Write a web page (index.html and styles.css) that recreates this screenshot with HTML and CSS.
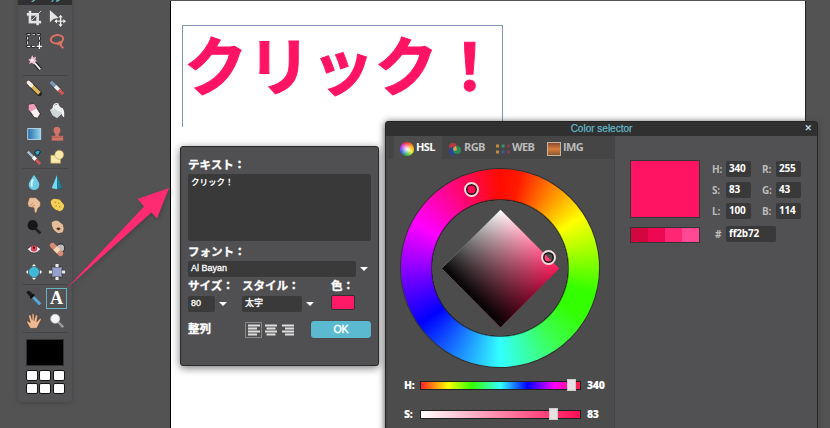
FILE: index.html
```html
<!DOCTYPE html>
<html lang="ja">
<head>
<meta charset="utf-8">
<title>Color selector</title>
<link rel="stylesheet" href="styles.css">
</head>
<body>
<main class="desktop">
  <section class="canvas"><div class="text-layer">クリック！</div></section>

  <aside class="palette">
    <header class="palette-title">ツール</header>
    <div class="tools g1">
      <svg viewBox="0 0 20 20"><path d="M5.500 2v12.500H18M2 6h12v12" fill="none" stroke="#e4e4e4" stroke-width="3"/><path d="M7 13L18 2" stroke="#ddd"/></svg>
      <svg viewBox="0 0 20 20"><path d="M2 1v14l4-4 6-1z" fill="#e6e6e6"/><path d="M14 8v11M8 13.500h11" stroke="#eee" stroke-width="1.600"/><path d="M14 6.500l2.500 3h-5zM14 20l2.500-3h-5zM7 13.500l3-2.500v5zM20 13.500l-3-2.500v5z" fill="#eee"/></svg>
      <svg viewBox="0 0 20 20"><path d="M3 3h13v13H3z" fill="none" stroke="#1c1c1c" stroke-width="2.600" stroke-dasharray="3.600 1.600"/><path d="M3 3h13v13H3z" fill="none" stroke="#f4f4f4" stroke-width="1.200" stroke-dasharray="3 2.200"/><path d="M16 13v6M13 16h6" stroke="#fff" stroke-width="1.500"/></svg>
      <svg viewBox="0 0 20 20"><ellipse cx="10" cy="8" rx="7" ry="4.600" fill="none" stroke="#d37467" stroke-width="2.400" transform="rotate(-8 10 8)"/><path d="M12 11l3 1-1 3 3 3M13 13l-3 1" fill="none" stroke="#d37467" stroke-width="2.400"/></svg>
      <svg viewBox="0 0 20 20"><path d="M9 8l8 9" stroke="#181818" stroke-width="4"/><path d="M9 8l8 9" stroke="#eee" stroke-width="2"/><path d="M8 1l1.500 3 3-1-1 3 2 2-3 1 0 3-3-2-3 1 1-3-2-2 3-1z" fill="#f4b9d2"/><circle cx="8" cy="7" r="1.500" fill="#fff"/></svg>
    </div>
    <div class="tools g2">
      <svg viewBox="0 0 20 20"><path d="M5 5l11 11" stroke="#222" stroke-width="5.500" stroke-linecap="round"/><path d="M5 5l11 11" stroke="#deb45a" stroke-width="4.200"/><path d="M4 4l3 3" stroke="#f8e9e2" stroke-width="4.500" stroke-linecap="round"/></svg>
      <svg viewBox="0 0 20 20"><path d="M3 3l6 6" stroke="#7b99b9" stroke-width="4"/><path d="M8 8l5 5" stroke="#f2f2f2" stroke-width="4"/><path d="M12 12l5 5" stroke="#c75b57" stroke-width="4"/></svg>
      <svg viewBox="0 0 20 20"><path d="M4 3l6-1 7 11-3 5-4-1-6-9z" fill="#fff0f3" stroke="#222" stroke-width=".7"/><path d="M4 3l6-1 3 5-7 4-2-3z" fill="#ee9cb8"/></svg>
      <svg viewBox="0 0 20 20"><path d="M2 9l9-7 7 9-8 7-5-3z" fill="#cfd5d8"/><path d="M6 9V5q1-4 5-3v4" fill="none" stroke="#f3f3f3" stroke-width="1.500"/><path d="M14 6q5 0 4 11-3-1-3-6" fill="#f2f5f6"/><ellipse cx="11" cy="7" rx="5" ry="2.500" fill="#eef1f2" transform="rotate(40 11 7)"/></svg>
      <svg viewBox="0 0 20 20"><defs><linearGradient id="grad"><stop stop-color="#276aa8"/><stop offset="1" stop-color="#92d7ef"/></linearGradient></defs><rect x="3" y="4" width="14.500" height="12" fill="url(#grad)" stroke="#c5e2ef"/></svg>
      <svg viewBox="0 0 20 20"><circle cx="10" cy="6" r="4" fill="#cf7568"/><path d="M8 8h4v4h5v5.500H4V12h4z" fill="#cf7568"/><path d="M4 13.500h13" stroke="#a8554b"/></svg>
      <svg viewBox="0 0 20 20"><path d="M3 4l7 7" stroke="#a8bfda" stroke-width="3"/><path d="M9 10l3 3" stroke="#fff" stroke-width="4"/><path d="M12 13l5 5" stroke="#c75b57" stroke-width="3.500"/><path d="M11 5q3-5 6-1l-2 4q-3 1-4-3" fill="#3aa8c8" stroke="#182c33"/></svg>
      <svg viewBox="0 0 20 20"><g fill="#f6e9a9" stroke="#bd9e5c" stroke-width=".7"><path d="M3 8h11v9H3z"/><circle cx="12.500" cy="7.500" r="5"/></g></svg>
    </div>
    <div class="tools g3">
      <svg viewBox="0 0 20 20"><path d="M10 2q6 8 6 11a6 6 0 0 1-12 0q0-3 6-11z" fill="#70cbe5"/><path d="M9 7q-3 5-1 8" stroke="#d5f5fc" stroke-width="2" fill="none"/></svg>
      <svg viewBox="0 0 20 20"><path d="M10 2l6 15-6 1z" fill="#227c98"/><path d="M10 2L4 17l6 1z" fill="#78d8ec"/></svg>
      <svg viewBox="0 0 20 20"><path d="M5 2h7l5 5v4l-3 3-1 4-2 1-1-6-6-1-1-4z" fill="#eac09b" stroke="#8e6a50" stroke-width=".5"/><path d="M6 10l3-2M8 12l3-2" stroke="#b88a66" fill="none"/></svg>
      <svg viewBox="0 0 20 20"><path d="M3 6q1-3 4-3l6 1 5 6q0 6-5 7l-5-2q-5-4-5-9z" fill="#f3cf57"/><g fill="#b58f29"><circle cx="8" cy="7" r=".8"/><circle cx="12" cy="8" r=".8"/><circle cx="9" cy="11" r=".8"/><circle cx="13" cy="12" r=".8"/></g></svg>
      <svg viewBox="0 0 20 20"><path d="M11 11l6 6" stroke="#222" stroke-width="2.800"/><circle cx="8.500" cy="8" r="5.500" fill="#171717"/></svg>
      <svg viewBox="0 0 20 20"><path d="M4 5q3-3 7-2l5 4q3 5 0 9l-5 1q-7-4-7-12z" fill="#e7bc98"/><path d="M9 12q3-3 5 0l-2 2z" fill="#49362d"/></svg>
      <svg viewBox="0 0 20 20"><path d="M2.500 10q7.500-7 15 0-7.500 9-15 0z" fill="#fff" stroke="#333" stroke-width=".7"/><circle cx="10" cy="9.500" r="3.600" fill="#d9465c"/><circle cx="10" cy="8.500" r="1.200" fill="#3d1118"/></svg>
      <svg viewBox="0 0 20 20"><circle cx="14" cy="9" r="4.500" fill="#bbb" stroke="#333"/><path d="M5 6l9 9" stroke="#d68b77" stroke-width="6" stroke-linecap="round"/><path d="M8 9l4 4" stroke="#f6d5b5" stroke-width="6"/></svg>
      <svg viewBox="0 0 20 20"><circle cx="10" cy="10" r="5.800" fill="#40b7d5"/><path d="M7.500 3.500h5L10 1zM7.500 16.500h5L10 19zM3.500 7.500v5L1 10zM16.500 7.500v5L19 10z" fill="#fff"/></svg>
      <svg viewBox="0 0 20 20"><path d="M10 1v18M1 10h18" stroke="#eee" stroke-width="3.600"/><path d="M4 4q6 2 12 0-2 6 0 12-6-2-12 0 2-6 0-12z" fill="#989fca" stroke="#444" stroke-width=".7"/></svg>
    </div>
    <div class="tools g4">
      <svg viewBox="0 0 20 20"><path d="M4 4l5 5" stroke="#1a1a1a" stroke-width="4" stroke-linecap="round"/><path d="M6 10l4-4" stroke="#111" stroke-width="2"/><path d="M9 9l8 8" stroke="#5ba7d9" stroke-width="3.500"/></svg>
      <span class="type-tool">A</span>
      <svg viewBox="0 0 20 20"><path d="M6 18l-4-7 1-1 3 2-2-8 2-1 2 6V2h2v8l2-7 2 1-1 7 4-4 1 1-5 10z" fill="#edba91" stroke="#76513c" stroke-width=".4"/></svg>
      <svg viewBox="0 0 20 20"><path d="M11 11l6 6" stroke="#999" stroke-width="3"/><circle cx="8" cy="7.500" r="5" fill="#f4f4f4" stroke="#ccc"/></svg>
    </div>
    <div class="front-color"></div>
    <div class="swatches"><i></i><i></i><i></i><i></i><i></i><i></i></div>
  </aside>

  <section class="text-dialog">
    <label class="caption">テキスト：</label>
    <div class="textarea">クリック！</div>
    <label class="caption font-caption">フォント：</label>
    <div class="font-row"><div class="field">Al Bayan</div><i class="caret"></i></div>
    <div class="options">
      <div><label class="caption">サイズ：</label><div class="control"><span class="field">80</span><i class="caret"></i></div></div>
      <div><label class="caption">スタイル：</label><div class="control style-control"><span class="field">太字</span><i class="caret"></i></div></div>
      <div><label class="caption">色：</label><div class="text-color"></div></div>
    </div>
    <div class="actions">
      <span class="caption">整列</span>
      <div class="aligns">
        <svg class="selected" viewBox="0 0 17 16"><path d="M3 3.500h12M3 6.500h9M3 9.500h12M3 12.500h9" stroke="#ddd" stroke-width="2"/></svg>
        <svg viewBox="0 0 17 16"><path d="M3 3.500h12M4.500 6.500h9M3 9.500h12M4.500 12.500h9" stroke="#ddd" stroke-width="2"/></svg>
        <svg viewBox="0 0 17 16"><path d="M3 3.500h12M6 6.500h9M3 9.500h12M6 12.500h9" stroke="#ddd" stroke-width="2"/></svg>
      </div>
      <div class="ok">OK</div>
    </div>
  </section>

  <section class="color-dialog">
    <header class="title">Color selector<span class="close">✕</span></header>
    <div class="body">
      <div class="picker">
        <nav class="tabs">
          <div class="tab active"><i class="hue-icon"></i>HSL</div>
          <div class="tab rgb"><svg viewBox="0 0 14 14"><circle cx="5" cy="5" r="4" fill="#b73942"/><circle cx="5" cy="9" r="4" fill="#294596"/><circle cx="9" cy="8" r="4" fill="#2d8a55"/><path d="M5 6l3-2 1 4-3 1z" fill="#e2a54f"/></svg>RGB</div>
          <div class="tab web"><svg viewBox="0 0 14 14"><path d="M0 4h3M0 10h3" stroke="#bb8c42" stroke-width="3"/><path d="M5.500 4h3" stroke="#389466" stroke-width="3"/><path d="M5.500 10h3" stroke="#355e9c" stroke-width="3"/><path d="M11 4h3M11 10h3" stroke="#8d3851" stroke-width="3"/></svg>WEB</div>
          <div class="tab img"><i class="img-icon"></i>IMG</div>
        </nav>
        <div class="wheel">
          <div class="ring"></div><div class="diamond"></div>
          <i class="marker hue-marker"></i><i class="marker tone-marker"></i>
        </div>
        <div class="slider"><b>H:</b><div class="track hue"><i class="thumb"></i></div><b>340</b></div>
        <div class="slider second"><b>S:</b><div class="track saturation"><i class="thumb"></i></div><b>83</b></div>
      </div>
      <div class="values">
        <div class="preview"><div class="current"></div><div class="shades"><i></i><i></i><i></i><i></i></div></div>
        <div class="numbers">
          <b>H:</b><span>340</span><b>R:</b><span>255</span>
          <b>S:</b><span>83</span><b>G:</b><span>43</span>
          <b>L:</b><span>100</span><b>B:</b><span>114</span>
          <b class="hash">#</b><span class="hex">ff2b72</span>
        </div>
      </div>
    </div>
  </section>

  <svg class="arrow" viewBox="0 0 830 428"><path d="M66.500 288.500L144 206.500 137.500 199 169 188 157 218.500 151.500 212.500Z" fill="#ff2b72"/></svg>
</main>
</body>
</html>
```
FILE: styles.css
```css
* { box-sizing: border-box; }
body { margin: 0; }
.desktop { position: relative; width: 830px; height: 428px; overflow: hidden; background: #535353; color: #fff; font-family: "Liberation Sans", "Noto Sans CJK JP", sans-serif; }
.canvas { position: absolute; left: 170px; top: 1px; width: 636px; height: 430px; padding: 24px 0 0 11px; background: #fff; border-left: 1px solid #000; border-right: 1px solid #222; }
.text-layer { width: 321px; height: 102px; border: 1px solid #8094b8; border-bottom: 0; padding-left: 1px; color: #ff1464; font: bold 63.5px/73px "Noto Sans CJK JP", sans-serif; white-space: nowrap; -webkit-text-stroke: 1px #ff1464; }
.palette { position: absolute; left: 18px; top: -13px; width: 54px; height: 415px; background: #525254; border-radius: 3px; box-shadow: 0 1px 5px #444; }
.palette-title { height: 18px; background: #303030; color: #73c9d6; font: 11px/20px "Noto Sans CJK JP", sans-serif; text-align: center; }
.tools { display: grid; grid-template-columns: 23px 23px; justify-content: center; align-items: center; justify-items: center; border-bottom: 1px solid #454547; margin: 0 4px; }
.tools svg { width: 18px; height: 18px; filter: drop-shadow(0 0 .5px #222); }
.g1 { height: 71px; padding-top: 2px; grid-auto-rows: 22.6px; }
.g2 { height: 93px; padding-top: 1px; grid-auto-rows: 22.8px; }
.g3 { height: 116px; padding-top: 2px; grid-auto-rows: 22.4px; }
.g4 { height: 48px; padding-top: 2px; grid-auto-rows: 22.6px; }
.type-tool { width: 21px; height: 21px; border: 1.5px solid #66b4c2; font: bold 18px/18px "Liberation Serif", serif; text-align: center; }
.front-color { width: 38px; height: 27px; margin: 6px auto 0; background: #000; border: 1px solid #333; }
.swatches { display: grid; grid-template-columns: repeat(3, 12px); grid-auto-rows: 11px; gap: 2px 1.500px; justify-content: center; margin-top: 4px; }
.swatches i { background: #fff; border: 1px solid #141414; border-radius: 2px; }
.text-dialog { position: absolute; left: 180px; top: 146px; width: 199px; height: 220px; padding: 11px 7px; background: #505052; border: 1px solid #292929; border-radius: 3px; box-shadow: 0 2px 9px #777; }
.caption { display: block; height: 16px; font: bold 11.500px/13px "Noto Sans CJK JP", sans-serif; white-space: nowrap; -webkit-text-stroke: .3px #fff; }
.textarea { width: 183px; height: 67px; padding: 0 3px; background: #393939; border-radius: 3px; font: bold 8.500px/14px "Noto Sans CJK JP", sans-serif; }
.font-caption { margin-top: 4px; }
.field { display: block; height: 16px; padding-left: 3px; background: #3a3a3a; border-radius: 2px; font: 9px/15px "Liberation Sans", "Noto Sans CJK JP", sans-serif; -webkit-text-stroke: .3px #fff; }
.font-row, .control { display: flex; align-items: center; gap: 4px; }
.font-row .field { width: 168px; }
.caret { border: 4px solid transparent; border-top-color: #fff; border-bottom: 0; }
.options { display: grid; grid-template-columns: 54px 89px 1fr; margin-top: 2px; }
.control .field { width: 27px; }
.style-control .field { width: 60px; }
.control { margin-top: 1px; }
.text-color { width: 24px; height: 15px; background: #ff1966; border: 1px solid #303030; border-radius: 2px; }
.actions { display: grid; grid-template-columns: 57px 66px 60px; align-items: center; margin-top: 9px; }
.aligns { display: flex; }
.aligns svg { width: 17px; height: 16px; }
.aligns .selected { outline: 1px solid #888; outline-offset: -1px; }
.ok { height: 17px; background: #5cbad0; border-radius: 3px; font: 10.500px/17px "Liberation Sans", sans-serif; -webkit-text-stroke: .4px #fff; text-align: center; box-shadow: 0 0 1px #222; }
.color-dialog { position: absolute; left: 385px; top: 121px; width: 433px; height: 312px; background: #515153; border: 1px solid #262626; border-radius: 3px; box-shadow: 0 1px 7px #444; }
.title { position: relative; height: 14px; background: #303030; color: #61b8c9; font-size: 10px; line-height: 13px; text-align: center; -webkit-text-stroke: .25px #61b8c9; }
.close { position: absolute; right: 5px; top: 0; color: #fff; font: bold 9px/13px "DejaVu Sans", sans-serif; }
.body { display: flex; height: 296px; }
.picker { width: 229px; background: #4c4c4c; border-left: 2px solid #484848; border-right: 1px solid #454545; }
.tabs { display: flex; height: 23px; padding-left: 6px; background: #454545; }
.tab { display: flex; align-items: center; gap: 2px; width: 48px; padding: 0 0 2px 6px; color: #bbb; font: bold 11px/20px "Open Sans", sans-serif; letter-spacing: -.6px; }
.tab svg, .tab i { width: 14px; height: 14px; margin-top: 4px; flex: none; }
.active { background: #4c4c4c; color: #fff; }
.rgb { width: 48px; }
.web { width: 51px; }
.hue-icon { border-radius: 50%; background: radial-gradient(#fff, transparent 60%), conic-gradient(#f33, #f90, #ee3, #3b4, #36e, #c3e, #f33); }
.img-icon { border: 1px solid #c3b49d; background: linear-gradient(#8c4b34, #d87d3b 50%, #8c582f); }
.wheel { position: relative; width: 198px; height: 198px; margin: 10px 0 0 13px; }
.ring { width: 198px; height: 198px; border-radius: 50%; background: radial-gradient(circle, #4c4c4c 0 67.5px, #222 68px, transparent 69.5px), conic-gradient(#ff0c00, #ff1a00 12deg, #ff0 58deg, #3f0 105deg, #3f0 120deg, #3cff55 145deg, #3ff 180deg, #00f 235deg, #f0f 298deg, #ff0c00); box-shadow: 0 0 0 1px #303030; }
.diamond { position: absolute; left: 57.500px; top: 57.500px; width: 83px; height: 83px; transform: rotate(45deg); background: linear-gradient(to top, #000, transparent), linear-gradient(to right, #fff, #ff1759); }
.marker { position: absolute; width: 15px; height: 15px; border: 2px solid #f2dddd; border-radius: 50%; box-shadow: inset 0 0 0 1.500px #171717; }
.hue-marker { left: 63px; top: 13px; }
.tone-marker { left: 140px; top: 81px; }
.slider { display: grid; grid-template-columns: 16px 164px 30px; align-items: center; margin: 10px 0 0 16px; height: 16px; font: bold 10.500px/16px "Open Sans", sans-serif; letter-spacing: -.3px; }
.slider b:last-child { padding-left: 3px; }
.second { margin-top: 13px; }
.track { position: relative; width: 161px; height: 9px; border: 1px solid #202020; }
.hue { background: linear-gradient(90deg, #f22, #ff0 17%, #3f0 32%, #3ff 50%, #00f 67%, #f0f 84%, #f24); }
.saturation { background: linear-gradient(90deg, #fff, #ff0d55); }
.thumb { position: absolute; left: 146px; top: -3px; width: 9px; height: 12px; background: #e7e1e4; border: 1px solid #ccc; }
.saturation .thumb { left: 128px; }
.values { display: flex; padding: 24px 0 0 15px; gap: 12px; }
.preview { width: 70px; }
.current { height: 58px; background: #ff1464; border: 1px solid #353535; }
.shades { display: grid; grid-template-columns: repeat(4, 1fr); height: 16px; margin-top: 9px; border: 1px solid #353535; }
.shades i:nth-child(1) { background: #d20740; }
.shades i:nth-child(2) { background: #ee0752; }
.shades i:nth-child(3) { background: #ff2674; }
.shades i:nth-child(4) { background: #ff4994; }
.numbers { display: grid; grid-template-columns: 14px 25px 25px 25px; grid-template-rows: 21px 21px 23px 18px; align-content: start; padding-top: 1px; font: 10px/15px "Open Sans", sans-serif; letter-spacing: -.2px; }
.numbers b { color: #bbb; line-height: 17px; }
.numbers b:nth-child(4n + 3) { padding-left: 11px; }
.numbers span { height: 16px; padding-left: 3px; background: #393939; border-radius: 2px; font-weight: 700; }
.numbers .hash { padding-left: 3px; }
.numbers .hex { grid-column: 2 / 4; }
.arrow { position: absolute; left: 0; top: 0; width: 830px; height: 428px; filter: drop-shadow(1px 2px 2px #444); pointer-events: none; }
```
